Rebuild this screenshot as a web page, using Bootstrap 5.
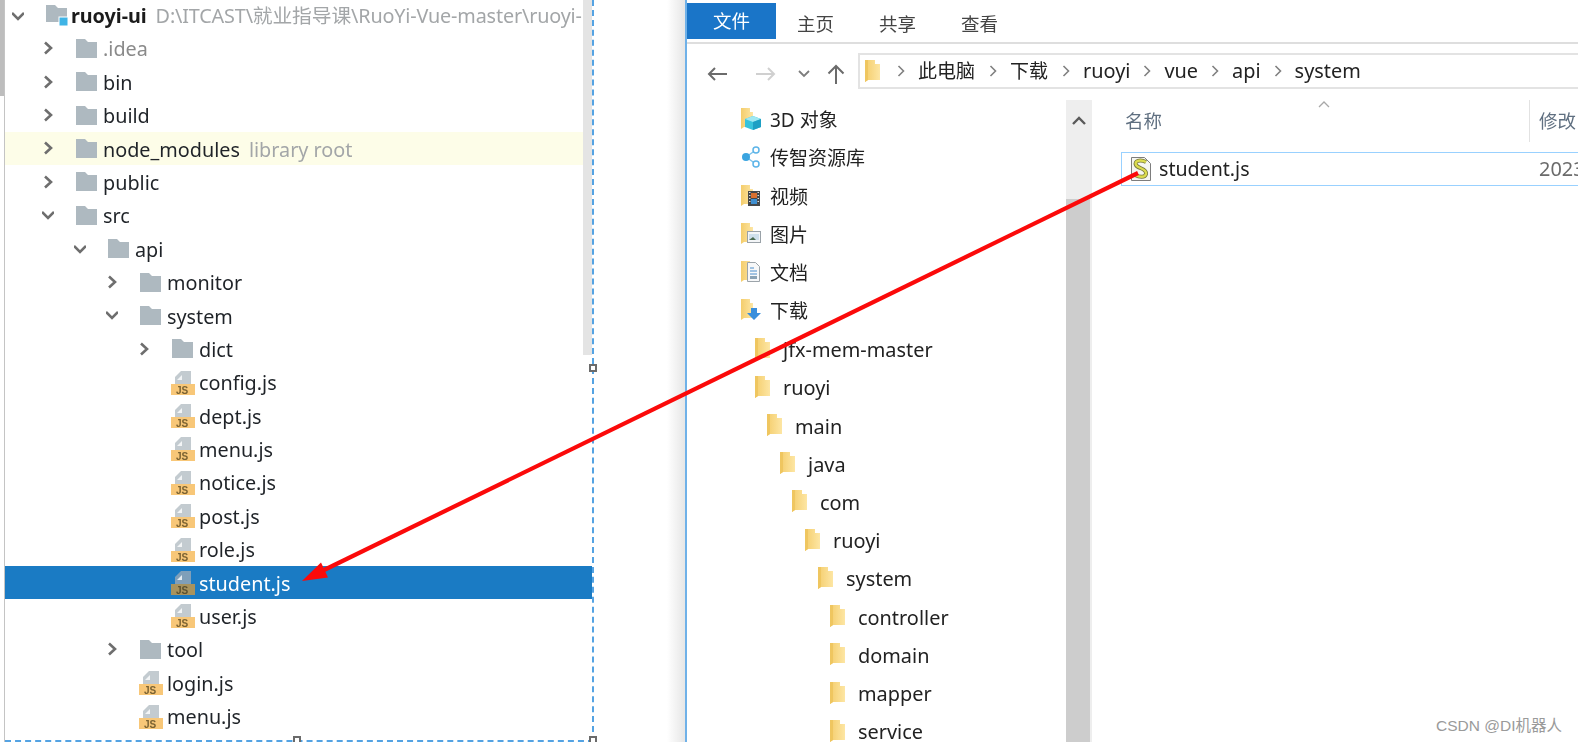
<!DOCTYPE html>
<html lang="zh-CN">
<head>
<meta charset="utf-8">
<title>student.js</title>
<link href="https://cdn.jsdelivr.net/npm/bootstrap@5.3.0/dist/css/bootstrap.min.css" rel="stylesheet">
<style>
html,body{height:742px;overflow:hidden;background:#fff}
body{font-family:"Noto Sans","Noto Sans CJK SC",sans-serif;color:#1f2328;position:relative}
.stage{width:1578px;height:742px;filter:blur(.35px)}
/* left tree */
.edge{width:5px;border-right:1px solid #c4c4c4;flex:none}
.edge-fill{height:96px;background:#bdbdbd}
.tree-pane{width:589px;height:742px;flex:none;border-right:2px dashed #54a3e3;border-bottom:2px dashed #54a3e3}
.tree-bar{right:0;top:0;width:9px;height:355px;background:#e4e4e4}
.tree-row{height:33.4px;font-size:19.8px;line-height:1;white-space:nowrap}
.tree-row.first{height:31.6px}
.tree-row:not(.first)>span:not(.chev){margin-top:2px}
.l0{padding-left:7px}.l1{padding-left:37px}.l2{padding-left:69px}.l3{padding-left:101px}.l4{padding-left:133px}
.chev{width:12px;height:14px;flex:none;margin-right:21px;color:#6e6e6e}
.tico{width:24px;height:25px;flex:none;margin-right:4px}
.lib-row{background:#fdfde8;margin-right:9px}
.sel-row{background:#1a7bc4;color:#fff;--js-top:#7f9fb9;--js-bot:#a8935d;--js-txt:#5a5030}
.dim{color:#8a8a8a}
.hint{color:#a3a6a8;margin-left:9px}
.path-hint{letter-spacing:-.15px}
.root-name{font-weight:700;color:#1b1b1b;margin-left:-2px;letter-spacing:-.05px}
.hdl{width:8px;height:8px;border:2px solid #6b6b6b;background:#fff;position:absolute}
/* explorer */
.gutter{width:91px;flex:none;background:linear-gradient(90deg,#fff 0,#fff 73px,#e6e6e6 100%)}
.xwin{border-left:2px solid #6fb1e8;min-width:0;font-size:19.9px;line-height:1;color:#222}
.cjk{font-size:19px}
.ribbon{height:44px;border-bottom:2px solid #dedede;flex:none}
.rtab-file{width:89px;height:36px;margin-top:3px;background:#1a75c8;color:#fff;font-size:18.5px;margin-right:21px}
.rtabs{gap:45px;margin-top:3px;font-size:18.5px;color:#444}
.navrow{height:56px;flex:none}
.nav-btns{width:171px;flex:none;padding-left:20px;margin-top:4px}
.btn-fwd{margin-left:29px}
.btn-down{margin-left:22px}
.btn-up{margin-left:17px}
.addr{height:36px;margin-top:9px;border:2px solid #e3e3e3;border-right:0;padding-left:4px;white-space:nowrap}
.addr .cjk{margin-right:1px}
.crumb-c{width:8px;height:12px;color:#808080;flex:none;margin:0 13px}
.navtree{width:379px;flex:none;overflow:hidden}
.nrow{height:38.24px;white-space:nowrap}
.nrow>span{margin-top:3px;line-height:.9}
.nico{width:20px;height:22px;flex:none;margin-right:9px}
.n0{padding-left:54px}.n1{padding-left:67px}.n2{padding-left:79px}.n3{padding-left:92px}.n4{padding-left:104px}.n5{padding-left:117px}.n6{padding-left:130px}.n7{padding-left:142px}
.vbar{width:26px;flex:none;background:#eee}
.vbar-head{height:99px}
.vbar-thumb{background:#cdcdcd;margin-right:2px}
.cols{height:52px;color:#5f6f80;font-size:18.5px}
.col-name{padding-left:33px;width:438px;border-right:1px solid #e2e2e2;height:42px}
.col-mod{padding-left:9px;height:42px}
.frow{height:34px;margin-left:29px;border:1px solid #99d1ff;border-right:0;white-space:nowrap;overflow:hidden}
.fico{width:22px;height:26px;flex:none;margin-left:8px;margin-right:7px}
.fname{width:380px;flex:none;font-size:19.6px}
.fdate{color:#6b6b6b;flex:none}
.sort-c{left:226px;top:0;width:12px;height:8px;color:#a8a8a8}
.markup{left:0;top:0;pointer-events:none}
.mark-csdn{right:16px;bottom:9px;font-family:"Liberation Sans","Noto Sans CJK SC",sans-serif;font-size:15.500px;line-height:1;color:#9a9a9a}
</style>
</head>
<body>
<svg width="0" height="0" class="position-absolute">
  <defs>
    <linearGradient id="yg" x1="0" y1="0" x2="1" y2="0"><stop offset="0" stop-color="#f4cd6c"/><stop offset="1" stop-color="#fde6a4"/></linearGradient>
    <symbol id="ch-r" viewBox="0 0 12 14"><path d="M3 1.500 9 7 3 12.500" fill="none" stroke="currentColor" stroke-width="2.600"/></symbol>
    <symbol id="ch-d" viewBox="0 0 12 14"><path d="M0 4 6 10 12 4" fill="none" stroke="currentColor" stroke-width="2.600"/></symbol>
    <symbol id="fold" viewBox="0 0 24 25"><path d="M1 3h9l3 3h9v16H1z" fill="#aeb9c0"/></symbol>
    <symbol id="mod" viewBox="0 0 24 25"><path d="M1 2h9l3 3h9v14H1z" fill="#aeb9c0"/><rect x="14" y="14" width="9" height="9" fill="#3fb4e6" stroke="#fff" stroke-width="1"/></symbol>
    <symbol id="jsf" viewBox="0 0 24 25"><path d="M10 1h10v13H4V7z" style="fill:var(--js-top,#c3cbd0)"/><path d="M11 5v5H6z" fill="#fff" opacity=".8"/><rect x="0" y="14" width="24" height="11" style="fill:var(--js-bot,#f8c778)"/><text x="5" y="23.500" font-family="Liberation Sans,sans-serif" font-size="10" font-weight="700" style="fill:var(--js-txt,#7a6232)">JS</text></symbol>
    <symbol id="yf" viewBox="0 0 20 22"><path d="M1 0h10v4h5v16H4l-3 2z" fill="url(#yg)"/><path d="M1 0h3v20l-3 2z" fill="#efc660"/></symbol>
    <symbol id="i3d" viewBox="0 0 20 22"><path d="M0 0h9v4h3v15H3l-3 2z" fill="url(#yg)"/><path d="M12 8l8 3v8l-8 3-8-3v-8z" fill="#37c3dc"/><path d="M4 11l8 3 8-3-8-3z" fill="#9fe8f2"/><path d="M12 14v8l8-3v-8z" fill="#1d9fc4"/></symbol>
    <symbol id="ishare" viewBox="0 0 20 22"><path d="M15 4 5 11l10 7" fill="none" stroke="#7cc3ec" stroke-width="1.400"/><circle cx="5" cy="11" r="4" fill="#3aa4e0"/><circle cx="15" cy="4" r="3" fill="#fff" stroke="#5cb4e8" stroke-width="1.500"/><circle cx="15" cy="18" r="3" fill="#fff" stroke="#5cb4e8" stroke-width="1.500"/></symbol>
    <symbol id="ivid" viewBox="0 0 20 22"><path d="M0 0h9v4h3v15H3l-3 2z" fill="url(#yg)"/><rect x="7" y="6" width="12" height="15" fill="#45484a"/><path d="M8 7.500h1.500M8 10.500h1.500M8 13.500h1.500M8 16.500h1.500M16.500 7.500H18M16.500 10.500H18M16.500 13.500H18M16.500 16.500H18" stroke="#ddd"/><rect x="10" y="8" width="6" height="5" fill="#d9702f"/><rect x="10" y="14" width="6" height="5" fill="#3f8fd0"/></symbol>
    <symbol id="ipic" viewBox="0 0 20 22"><path d="M0 0h9v4h3v15H3l-3 2z" fill="url(#yg)"/><rect x="6.500" y="8.500" width="13" height="11" fill="#f4f6f8" stroke="#9aa2a8"/><rect x="8" y="11" width="10" height="6" fill="#cfe0ec"/><path d="M8 17l4-3 3 3z" fill="#4a6a50"/></symbol>
    <symbol id="idoc" viewBox="0 0 20 22"><path d="M0 0h9v4h3v15H3l-3 2z" fill="url(#yg)"/><path d="M6.500 1.500h8l4 4v15h-12z" fill="#f7f8f9" stroke="#9ca4aa"/><path d="M9 7h4M9 10h7M9 13h7" stroke="#4c8ecb"/><rect x="9" y="15" width="7" height="3" fill="#8ba3b5"/></symbol>
    <symbol id="idown" viewBox="0 0 20 22"><path d="M0 0h9v4h3v15H3l-3 2z" fill="url(#yg)"/><path d="M10 9h6v5h4l-7 7-7-7h4z" fill="#3a8fdc"/></symbol>
    <symbol id="ijs" viewBox="0 0 22 26"><path d="M1.500 1.500h13l6 6v17h-19z" fill="#f6f6f0" stroke="#7d7d7d"/><path d="M16 6C10 3 4 5 6 9s11 3 10 9c-1 4-7 3-11 1" fill="none" stroke="#77783c" stroke-width="4"/><path d="M16 6C10 3 4 5 6 9s11 3 10 9c-1 4-7 3-11 1" fill="none" stroke="#dcdc4e" stroke-width="2.400"/></symbol>
  </defs>
</svg>

<div class="stage d-flex">
  <div class="edge"><div class="edge-fill"></div></div>

  <div class="tree-pane position-relative overflow-hidden">
    <ul class="list-unstyled mb-0">
      <li class="tree-row first l0 d-flex align-items-center"><svg class="chev"><use href="#ch-d"/></svg><svg class="tico"><use href="#mod"/></svg><span class="root-name">ruoyi-ui</span><span class="hint path-hint">D:\ITCAST\就业指导课\RuoYi-Vue-master\ruoyi-</span></li>
      <li class="tree-row l1 d-flex align-items-center"><svg class="chev"><use href="#ch-r"/></svg><svg class="tico"><use href="#fold"/></svg><span class="dim">.idea</span></li>
      <li class="tree-row l1 d-flex align-items-center"><svg class="chev"><use href="#ch-r"/></svg><svg class="tico"><use href="#fold"/></svg><span>bin</span></li>
      <li class="tree-row l1 d-flex align-items-center"><svg class="chev"><use href="#ch-r"/></svg><svg class="tico"><use href="#fold"/></svg><span>build</span></li>
      <li class="tree-row lib-row l1 d-flex align-items-center"><svg class="chev"><use href="#ch-r"/></svg><svg class="tico"><use href="#fold"/></svg><span>node_modules</span><span class="hint">library root</span></li>
      <li class="tree-row l1 d-flex align-items-center"><svg class="chev"><use href="#ch-r"/></svg><svg class="tico"><use href="#fold"/></svg><span>public</span></li>
      <li class="tree-row l1 d-flex align-items-center"><svg class="chev"><use href="#ch-d"/></svg><svg class="tico"><use href="#fold"/></svg><span>src</span></li>
      <li class="tree-row l2 d-flex align-items-center"><svg class="chev"><use href="#ch-d"/></svg><svg class="tico"><use href="#fold"/></svg><span>api</span></li>
      <li class="tree-row l3 d-flex align-items-center"><svg class="chev"><use href="#ch-r"/></svg><svg class="tico"><use href="#fold"/></svg><span>monitor</span></li>
      <li class="tree-row l3 d-flex align-items-center"><svg class="chev"><use href="#ch-d"/></svg><svg class="tico"><use href="#fold"/></svg><span>system</span></li>
      <li class="tree-row l4 d-flex align-items-center"><svg class="chev"><use href="#ch-r"/></svg><svg class="tico"><use href="#fold"/></svg><span>dict</span></li>
      <li class="tree-row l4 d-flex align-items-center"><span class="chev"></span><svg class="tico"><use href="#jsf"/></svg><span>config.js</span></li>
      <li class="tree-row l4 d-flex align-items-center"><span class="chev"></span><svg class="tico"><use href="#jsf"/></svg><span>dept.js</span></li>
      <li class="tree-row l4 d-flex align-items-center"><span class="chev"></span><svg class="tico"><use href="#jsf"/></svg><span>menu.js</span></li>
      <li class="tree-row l4 d-flex align-items-center"><span class="chev"></span><svg class="tico"><use href="#jsf"/></svg><span>notice.js</span></li>
      <li class="tree-row l4 d-flex align-items-center"><span class="chev"></span><svg class="tico"><use href="#jsf"/></svg><span>post.js</span></li>
      <li class="tree-row l4 d-flex align-items-center"><span class="chev"></span><svg class="tico"><use href="#jsf"/></svg><span>role.js</span></li>
      <li class="tree-row sel-row l4 d-flex align-items-center"><span class="chev"></span><svg class="tico"><use href="#jsf"/></svg><span>student.js</span></li>
      <li class="tree-row l4 d-flex align-items-center"><span class="chev"></span><svg class="tico"><use href="#jsf"/></svg><span>user.js</span></li>
      <li class="tree-row l3 d-flex align-items-center"><svg class="chev"><use href="#ch-r"/></svg><svg class="tico"><use href="#fold"/></svg><span>tool</span></li>
      <li class="tree-row l3 d-flex align-items-center"><span class="chev"></span><svg class="tico"><use href="#jsf"/></svg><span>login.js</span></li>
      <li class="tree-row l3 d-flex align-items-center"><span class="chev"></span><svg class="tico"><use href="#jsf"/></svg><span>menu.js</span></li>
    </ul>
    <div class="tree-bar position-absolute"></div>
  </div>

  <div class="gutter"></div>

  <div class="xwin flex-grow-1 d-flex flex-column overflow-hidden">
    <div class="ribbon d-flex align-items-start">
      <div class="rtab-file d-flex align-items-center justify-content-center">文件</div>
      <div class="rtabs d-flex align-items-center h-100"><span>主页</span><span>共享</span><span>查看</span></div>
    </div>
    <div class="navrow d-flex">
      <div class="nav-btns d-flex align-items-center">
        <svg width="20" height="16" viewBox="0 0 20 16"><path d="M20 8H2M8 2 2 8l6 6" fill="none" stroke="#6b6b6b" stroke-width="2"/></svg>
        <svg class="btn-fwd" width="20" height="16" viewBox="0 0 20 16"><path d="M0 8h18M12 2l6 6-6 6" fill="none" stroke="#d0d0d0" stroke-width="2"/></svg>
        <svg class="btn-down" width="12" height="8" viewBox="0 0 12 8"><path d="M1 1l5 5 5-5" fill="none" stroke="#7d7d7d" stroke-width="1.800"/></svg>
        <svg class="btn-up" width="18" height="20" viewBox="0 0 18 20"><path d="M9 20V2M1.500 9.500 9 2l7.500 7.500" fill="none" stroke="#6b6b6b" stroke-width="2"/></svg>
      </div>
      <div class="addr flex-grow-1 d-flex align-items-center">
        <svg class="nico me-0" viewBox="0 0 20 22"><use href="#yf"/></svg>
        <svg class="crumb-c" viewBox="0 0 8 12"><path d="M1.500 1 6.500 6l-5 5" fill="none" stroke="currentColor" stroke-width="1.600"/></svg>
        <span class="cjk">此电脑</span>
        <svg class="crumb-c" viewBox="0 0 8 12"><path d="M1.500 1 6.500 6l-5 5" fill="none" stroke="currentColor" stroke-width="1.600"/></svg>
        <span class="cjk">下载</span>
        <svg class="crumb-c" viewBox="0 0 8 12"><path d="M1.500 1 6.500 6l-5 5" fill="none" stroke="currentColor" stroke-width="1.600"/></svg>
        <span>ruoyi</span>
        <svg class="crumb-c" viewBox="0 0 8 12"><path d="M1.500 1 6.500 6l-5 5" fill="none" stroke="currentColor" stroke-width="1.600"/></svg>
        <span>vue</span>
        <svg class="crumb-c" viewBox="0 0 8 12"><path d="M1.500 1 6.500 6l-5 5" fill="none" stroke="currentColor" stroke-width="1.600"/></svg>
        <span>api</span>
        <svg class="crumb-c" viewBox="0 0 8 12"><path d="M1.500 1 6.500 6l-5 5" fill="none" stroke="currentColor" stroke-width="1.600"/></svg>
        <span>system</span>
      </div>
    </div>
    <div class="d-flex flex-grow-1 overflow-hidden">
      <ul class="navtree list-unstyled mb-0">
        <li class="nrow n0 d-flex align-items-center"><svg class="nico"><use href="#i3d"/></svg><span class="cjk">3D 对象</span></li>
        <li class="nrow n0 d-flex align-items-center"><svg class="nico"><use href="#ishare"/></svg><span class="cjk">传智资源库</span></li>
        <li class="nrow n0 d-flex align-items-center"><svg class="nico"><use href="#ivid"/></svg><span class="cjk">视频</span></li>
        <li class="nrow n0 d-flex align-items-center"><svg class="nico"><use href="#ipic"/></svg><span class="cjk">图片</span></li>
        <li class="nrow n0 d-flex align-items-center"><svg class="nico"><use href="#idoc"/></svg><span class="cjk">文档</span></li>
        <li class="nrow n0 d-flex align-items-center"><svg class="nico"><use href="#idown"/></svg><span class="cjk">下载</span></li>
        <li class="nrow n1 d-flex align-items-center"><svg class="nico"><use href="#yf"/></svg><span>jfx-mem-master</span></li>
        <li class="nrow n1 d-flex align-items-center"><svg class="nico"><use href="#yf"/></svg><span>ruoyi</span></li>
        <li class="nrow n2 d-flex align-items-center"><svg class="nico"><use href="#yf"/></svg><span>main</span></li>
        <li class="nrow n3 d-flex align-items-center"><svg class="nico"><use href="#yf"/></svg><span>java</span></li>
        <li class="nrow n4 d-flex align-items-center"><svg class="nico"><use href="#yf"/></svg><span>com</span></li>
        <li class="nrow n5 d-flex align-items-center"><svg class="nico"><use href="#yf"/></svg><span>ruoyi</span></li>
        <li class="nrow n6 d-flex align-items-center"><svg class="nico"><use href="#yf"/></svg><span>system</span></li>
        <li class="nrow n7 d-flex align-items-center"><svg class="nico"><use href="#yf"/></svg><span>controller</span></li>
        <li class="nrow n7 d-flex align-items-center"><svg class="nico"><use href="#yf"/></svg><span>domain</span></li>
        <li class="nrow n7 d-flex align-items-center"><svg class="nico"><use href="#yf"/></svg><span>mapper</span></li>
        <li class="nrow n7 d-flex align-items-center"><svg class="nico"><use href="#yf"/></svg><span>service</span></li>
      </ul>
      <div class="vbar d-flex flex-column">
        <div class="vbar-head d-flex justify-content-center pt-3"><svg width="14" height="10" viewBox="0 0 14 10"><path d="M1 8l6-6 6 6" fill="none" stroke="#5a5a5a" stroke-width="2.400"/></svg></div>
        <div class="vbar-thumb flex-grow-1"></div>
      </div>
      <div class="flex-grow-1 overflow-hidden">
        <div class="cols d-flex position-relative">
          <svg class="sort-c position-absolute" viewBox="0 0 12 8"><path d="M1 7l5-5 5 5" fill="none" stroke="currentColor" stroke-width="1.300"/></svg>
          <div class="col-name d-flex align-items-center">名称</div>
          <div class="col-mod d-flex align-items-center">修改</div>
        </div>
        <div class="frow d-flex align-items-center">
          <svg class="fico"><use href="#ijs"/></svg>
          <span class="fname">student.js</span>
          <span class="fdate">2023</span>
        </div>
      </div>
    </div>
  </div>
</div>

<span class="hdl" style="left:589px;top:364px"></span>
<span class="hdl" style="left:293px;top:736px"></span>
<span class="hdl" style="left:589px;top:736px"></span>

<svg class="markup position-absolute" width="1578" height="742" viewBox="0 0 1578 742">
  <line x1="1138" y1="173" x2="322" y2="571" stroke="#fb0a0a" stroke-width="4.200"/>
  <polygon points="302,581 328,577.500 321,562.500" fill="#fb0a0a"/>
</svg>
<div class="mark-csdn position-absolute">CSDN @DI机器人</div>
</body>
</html>
